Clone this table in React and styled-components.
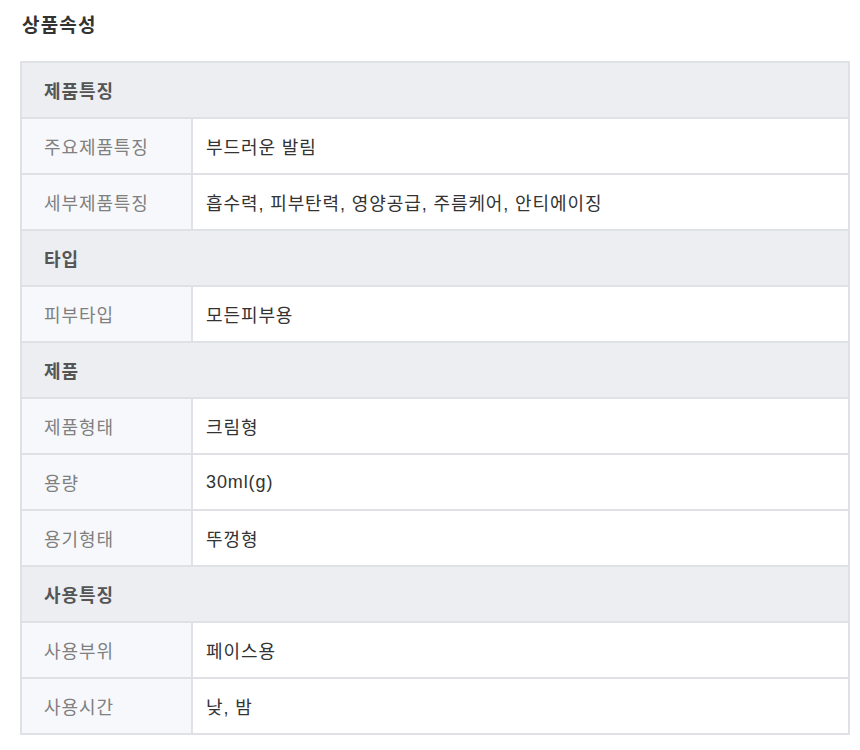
import React from 'react'
import styled, { createGlobalStyle } from 'styled-components'

const GlobalStyle = createGlobalStyle`
  body {
    margin: 0;
    background: #fff;
    font-family: "Liberation Sans", "Noto Sans CJK KR", sans-serif;
  }
`

const Page = styled.div`
  padding: 9px 10px 0 20px;
  width: 830px;
`

const Title = styled.h2`
  margin: 0 0 18px 2px;
  font-size: 19px;
  font-weight: 700;
  letter-spacing: 1.2px;
  color: #333;
  line-height: 34px;
`

const Table = styled.table`
  width: 830px;
  border-collapse: collapse;
  table-layout: fixed;
  border: 2px solid #dfe1e6;
  letter-spacing: 0.9px;
`

const GroupCell = styled.th`
  height: 54px;
  padding: 0 0 0 22px;
  text-align: left;
  background: #eceef2;
  color: #555;
  font-size: 18px;
  font-weight: 700;
  border: 2px solid #dfe1e6;
`

const Label = styled.th`
  height: 54px;
  padding: 0 0 0 22px;
  text-align: left;
  background: #f7f8fb;
  color: #808080;
  font-size: 18px;
  font-weight: 400;
  border: 2px solid #dfe1e6;
`

const Value = styled.td`
  padding: 0 0 0 13px;
  color: #333;
  font-size: 18px;
  border: 2px solid #dfe1e6;
`

const groups = [
  {
    name: '제품특징',
    rows: [
      ['주요제품특징', '부드러운 발림'],
      ['세부제품특징', '흡수력, 피부탄력, 영양공급, 주름케어, 안티에이징']
    ]
  },
  { name: '타입', rows: [['피부타입', '모든피부용']] },
  {
    name: '제품',
    rows: [
      ['제품형태', '크림형'],
      ['용량', '30ml(g)'],
      ['용기형태', '뚜껑형']
    ]
  },
  {
    name: '사용특징',
    rows: [
      ['사용부위', '페이스용'],
      ['사용시간', '낮, 밤']
    ]
  }
]

const App = () => (
  <Page>
    <GlobalStyle />
    <Title>상품속성</Title>
    <Table>
      <colgroup>
        <col style={{ width: 171 }} />
        <col />
      </colgroup>
      <tbody>
        {groups.map(group => (
          <React.Fragment key={group.name}>
            <tr>
              <GroupCell colSpan={2}>{group.name}</GroupCell>
            </tr>
            {group.rows.map(([label, value]) => (
              <tr key={label}>
                <Label>{label}</Label>
                <Value>{value}</Value>
              </tr>
            ))}
          </React.Fragment>
        ))}
      </tbody>
    </Table>
  </Page>
)

export default App
